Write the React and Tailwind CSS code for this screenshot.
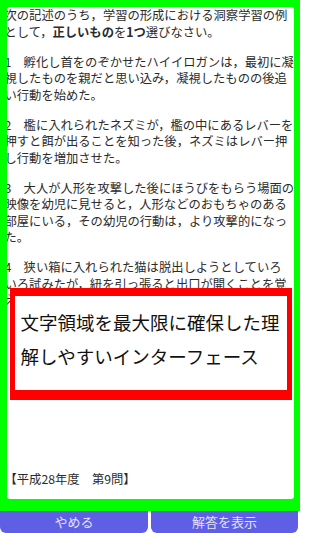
const jp = { fontFamily: '"Noto Sans CJK JP", "Noto Sans", sans-serif' };

const paragraphs = [
  [
    "次の記述のうち，学習の形成における洞察学習の例",
    <>
      として，<b className="font-bold">正しいもの</b>を<b className="font-bold">1つ</b>選びなさい。
    </>,
  ],
  [
    "1　孵化し首をのぞかせたハイイロガンは，最初に凝",
    "視したものを親だと思い込み，凝視したものの後追",
    "い行動を始めた。",
  ],
  [
    "2　檻に入れられたネズミが，檻の中にあるレバーを",
    "押すと餌が出ることを知った後，ネズミはレバー押",
    "し行動を増加させた。",
  ],
  [
    "3　大人が人形を攻撃した後にほうびをもらう場面の",
    "映像を幼児に見せると，人形などのおもちゃのある",
    "部屋にいる，その幼児の行動は，より攻撃的になっ",
    "た。",
  ],
  [
    "4　狭い箱に入れられた猫は脱出しようとしていろ",
    "いろ試みたが，紐を引っ張ると出口が開くことを覚",
    "えた。",
  ],
];

export default function App() {
  return (
    <div className="w-[300px] h-[533px] overflow-hidden flex flex-col bg-white" style={jp}>
      <div className="relative h-[511px] bg-[#00ff00] pt-[7px] pl-[7px] pr-[6px] pb-[12px] flex">
        <div className="flex-1 min-w-0 bg-white rounded-[3px] overflow-hidden">
          <div className="-ml-[2.5px] text-[12.3px] leading-[16.5px] text-[#2b2b2b] whitespace-nowrap flex flex-col gap-[13.5px]">
            {paragraphs.map((lines, i) => (
              <p key={i}>
                {lines.map((line, j) => (
                  <span key={j} className="block">
                    {line}
                  </span>
                ))}
              </p>
            ))}
            <p className="mt-[149px]">【平成28年度　第9問】</p>
          </div>
        </div>

        <div className="absolute left-[9.5px] top-[288px] w-[282px] h-[112px] bg-white border-[#ff0000] border-t-[8px] border-x-[5px] border-b-[10px] pl-[6px] pt-[10px]">
          <p className="text-[18.5px] leading-[33.7px] text-[#111] whitespace-nowrap">
            文字領域を最大限に確保した理
            <br />
            解しやすいインターフェース
          </p>
        </div>
      </div>

      <div className="h-[22px] flex gap-[3px] pr-[2px]">
        <button className="w-[148px] bg-[#5f5fe6] rounded-b-[6px] text-[13px] text-[#e2e2f5] leading-[22px]">
          やめる
        </button>
        <button className="flex-1 bg-[#5f5fe6] rounded-b-[6px] text-[13px] text-[#e2e2f5] leading-[22px]">
          解答を表示
        </button>
      </div>
    </div>
  );
}
